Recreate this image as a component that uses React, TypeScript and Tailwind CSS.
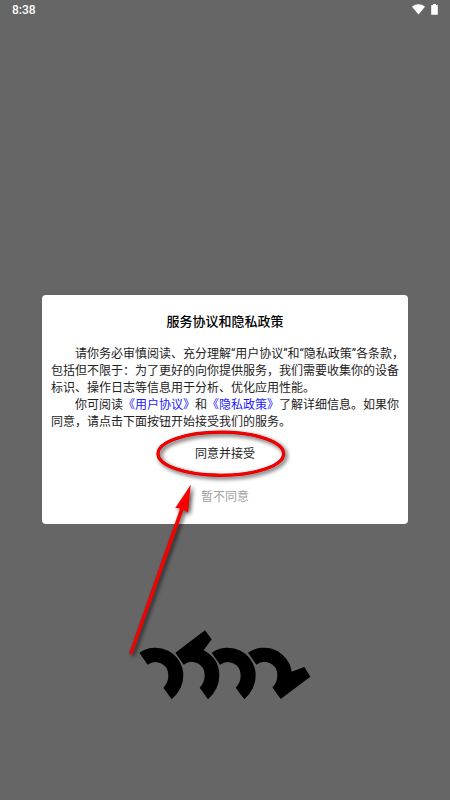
const agreementParagraphs = {
  intro:
    '请你务必审慎阅读、充分理解“用户协议”和“隐私政策”各条款，包括但不限于：为了更好的向你提供服务，我们需要收集你的设备标识、操作日志等信息用于分析、优化应用性能。',
  readMore: '你可阅读',
  outro: '了解详细信息。如果你同意，请点击下面按钮开始接受我们的服务。',
};

function StatusBar() {
  return (
    <header className="flex h-[19px] items-center justify-between px-3 text-white">
      <span className="text-xs font-medium">8:38</span>
      <div className="flex items-center gap-1.5">
        <svg width="13" height="11" viewBox="0 0 13 11" fill="currentColor" aria-hidden="true">
          <path d="M0 2.8C3.6-.5 9.4-.5 13 2.8L6.5 10.6Z" />
        </svg>
        <svg width="7" height="11" viewBox="0 0 7 11" fill="currentColor" aria-hidden="true">
          <path d="M2 0h3v1h1.3a.5.5 0 0 1 .5.5v8.8a.5.5 0 0 1-.5.5H.7a.5.5 0 0 1-.5-.5V1.5A.5.5 0 0 1 .7 1H2Z" />
        </svg>
      </div>
    </header>
  );
}

// Red ellipse and arrow that point at the accept button
function Pointer() {
  return (
    <svg
      className="pointer-events-none absolute left-1/2 top-[130px] -translate-x-1/2"
      width="200"
      height="240"
      viewBox="125 425 200 240"
      aria-hidden="true"
    >
      <defs>
        <filter id="pointer-shadow" x="-20%" y="-20%" width="140%" height="140%">
          <feDropShadow dx="2" dy="2" stdDeviation="2" floodColor="#000" floodOpacity="0.7" />
        </filter>
      </defs>
      <g filter="url(#pointer-shadow)">
        <ellipse cx="220.8" cy="453.7" rx="62.8" ry="21.6" fill="none" stroke="#c00000" strokeWidth="3.2" />
        <ellipse cx="220.8" cy="453.7" rx="62.8" ry="21.6" fill="none" stroke="#f80000" strokeWidth="2.4" />
        <path
          d="M190.5 485.5L187.8 512.3L183.6 509.5L132 654.3L129.4 653.3L180.4 508.2L175.6 507.7Z"
          fill="#fa0000"
          stroke="#c00000"
          strokeWidth="0.4"
        />
      </g>
    </svg>
  );
}

function Logo() {
  return (
    <svg width="172" height="70" viewBox="28 29 516 210" fill="#000" role="img" aria-label="logo">
      <path d="M29 97A84 84 0 0 1 161 165Q161 207 126 237L101 202Q116 188 116 165A39 39 0 0 0 54 133Z" />
      <path d="M137 97L226 30L246 57L222 90Q269 115 269 165Q269 207 235 237L210 202Q225 188 225 165A39 39 0 0 0 162 133Z" />
      <path d="M246 97A84 84 0 0 1 378 165Q378 207 344 237L318 202Q333 188 333 165A39 39 0 0 0 271 133Z" />
      <path d="M355 97A84 84 0 0 1 486 154L524 140L542 169L453 236L428 201Q443 188 443 165A39 39 0 0 0 380 133Z" />
    </svg>
  );
}

function AgreementDialog() {
  return (
    <section
      role="dialog"
      aria-labelledby="dialog-title"
      className="relative mx-[42px] flex flex-col items-center rounded bg-white py-[17px]"
    >
      <h1 id="dialog-title" className="text-[13px] font-medium leading-5 text-black">
        服务协议和隐私政策
      </h1>
      <div className="mt-3.5 w-full pl-[9px] text-xs leading-[17px] text-[#222]">
        <p className="indent-6">{agreementParagraphs.intro}</p>
        <p className="indent-6">
          {agreementParagraphs.readMore}
          <a href="#agreement" className="text-[#1a1aff]">《用户协议》</a>和
          <a href="#privacy" className="text-[#1a1aff]">《隐私政策》</a>
          {agreementParagraphs.outro}
        </p>
      </div>
      <button type="button" className="mt-[13px] text-xs leading-5 text-[#222]">
        同意并接受
      </button>
      <button type="button" className="mt-[23px] text-xs leading-5 text-[#a0a0a0]">
        暂不同意
      </button>
      <Pointer />
    </section>
  );
}

export default function App() {
  return (
    <div
      lang="zh-CN"
      className="flex min-h-screen flex-col bg-[#666] font-['Roboto','Noto_Sans_CJK_SC',sans-serif]"
    >
      <StatusBar />
      <main className="grid flex-1 grid-rows-[1fr_auto_1fr]">
        <div className="row-start-2">
          <AgreementDialog />
        </div>
        <div className="row-start-3 flex justify-center pt-[106px]">
          <Logo />
        </div>
      </main>
    </div>
  );
}
